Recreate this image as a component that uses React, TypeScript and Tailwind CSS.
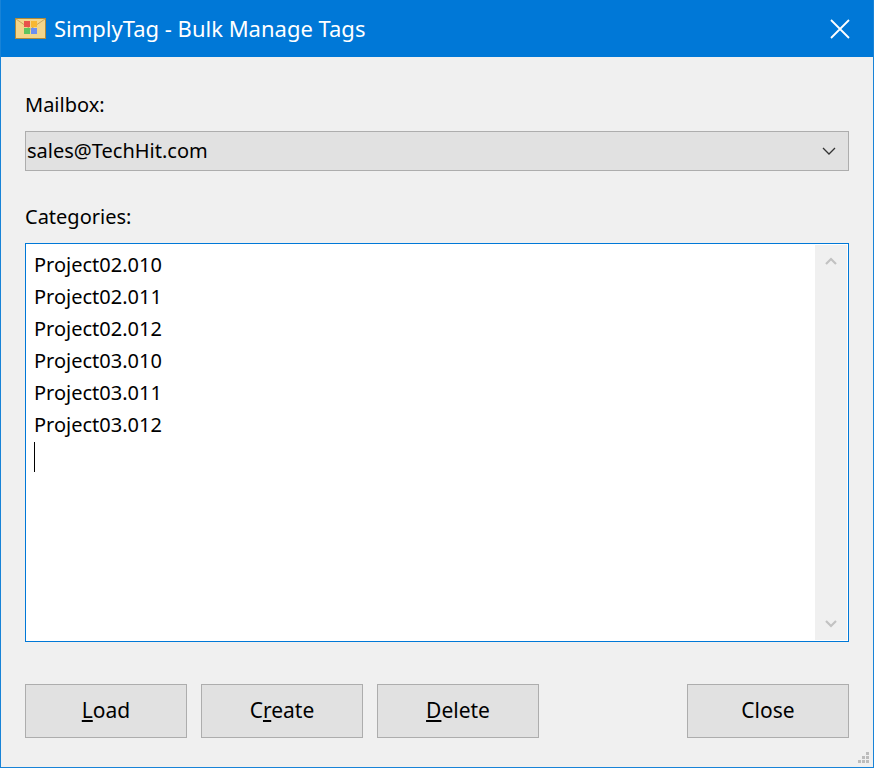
import React from "react";

const F = { fontFamily: '"Noto Sans", "Open Sans", sans-serif' };

function Btn({ children, className = "" }: { children: React.ReactNode; className?: string }) {
  return (
    <div className={`w-[162px] h-[54px] bg-[#e1e1e1] border border-[#adadad] flex items-center justify-center text-[21px] text-black ${className}`}>
      {children}
    </div>
  );
}

export default function App() {
  const items = ["Project02.010", "Project02.011", "Project02.012", "Project03.010", "Project03.011", "Project03.012"];
  return (
    <div style={F} className="w-[874px] h-[768px] flex flex-col border border-[#1883d7] border-t-0 bg-[#f0f0f0] relative overflow-hidden">
      <div className="h-[57px] bg-[#0078d7] flex items-center text-white shrink-0 -mx-px">
        <svg width="31" height="21" viewBox="0 0 31 21" className="ml-[15px]">
          <rect x="0.5" y="0.5" width="30" height="20" fill="#f3d58a" stroke="#b08a3a" />
          <path d="M1 1 L15.5 11 L30 1" fill="none" stroke="#c9a55a" />
          <rect x="9" y="3" width="6" height="6" fill="#e8524a" />
          <rect x="16" y="3" width="6" height="6" fill="#f7b731" />
          <rect x="9" y="10" width="6" height="6" fill="#5ec45e" />
          <rect x="16" y="10" width="6" height="6" fill="#6d8ff0" />
        </svg>
        <span className="ml-[8px] text-[22px]">SimplyTag - Bulk Manage Tags</span>
        <svg width="20" height="20" viewBox="0 0 20 20" className="ml-auto mr-[24px]">
          <path d="M1 1 L19 19 M19 1 L1 19" stroke="white" strokeWidth="1.8" />
        </svg>
      </div>
      <div className="flex flex-col px-[24px] text-[20px] text-black">
        <div className="mt-[34px] leading-[28px]">Mailbox:</div>
        <div className="mt-[12px] h-[40px] bg-[#e1e1e1] border border-[#adadad] flex items-center pl-[1px] pr-[12px]">
          <span>sales@TechHit.com</span>
          <svg width="14" height="8" viewBox="0 0 14 8" className="ml-auto">
            <path d="M1 1 L7 7 L13 1" fill="none" stroke="#333" strokeWidth="1.3" />
          </svg>
        </div>
        <div className="mt-[32px] leading-[28px]">Categories:</div>
        <div className="mt-[12px] h-[399px] bg-white border border-[#0078d7] flex">
          <div className="flex-1 pl-[8px] pt-[5px] leading-[32px]">
            {items.map((t) => (
              <div key={t}>{t}</div>
            ))}
            <div className="w-px h-[30px] bg-black mt-[1px]" />
          </div>
          <div className="w-[32px] m-px bg-[#f0f0f0] flex flex-col items-center justify-between py-[12px]">
            <svg width="12" height="8" viewBox="0 0 12 8"><path d="M1 7 L6 2 L11 7" fill="none" stroke="#c2c2c2" strokeWidth="2.2" /></svg>
            <svg width="12" height="8" viewBox="0 0 12 8"><path d="M1 1 L6 6 L11 1" fill="none" stroke="#c2c2c2" strokeWidth="2.2" /></svg>
          </div>
        </div>
        <div className="mt-[42px] flex">
          <Btn><span><u>L</u>oad</span></Btn>
          <Btn className="ml-[14px]"><span>C<u>r</u>eate</span></Btn>
          <Btn className="ml-[14px]"><span><u>D</u>elete</span></Btn>
          <Btn className="ml-auto">Close</Btn>
        </div>
      </div>
      <svg width="12" height="12" viewBox="0 0 12 12" className="absolute right-[3px] bottom-[3px]">
        <g fill="#bcbcbc">
          <rect x="8" y="0" width="3" height="3" />
          <rect x="4" y="4" width="3" height="3" />
          <rect x="8" y="4" width="3" height="3" />
          <rect x="0" y="8" width="3" height="3" />
          <rect x="4" y="8" width="3" height="3" />
          <rect x="8" y="8" width="3" height="3" />
        </g>
      </svg>
    </div>
  );
}
